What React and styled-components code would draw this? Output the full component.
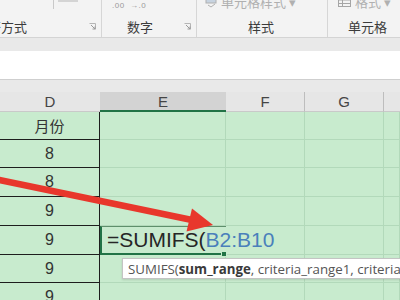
import React from 'react';
import styled, { createGlobalStyle } from 'styled-components';

const Global = createGlobalStyle`
  html, body { margin: 0; padding: 0; background: #fff; }
  body { font-family: "Liberation Sans", "Noto Sans CJK SC", sans-serif; }
  * { box-sizing: border-box; }
`;

const Screen = styled.div`
  position: relative;
  width: 400px;
  height: 300px;
  overflow: hidden;
  display: flex;
  flex-direction: column;
  background: #c8ebce;
`;

const Ribbon = styled.div`
  flex: none;
  height: 38px;
  display: flex;
  background: #f3f3f3;
  border-bottom: 1px solid #d4d4d4;
`;

const Group = styled.div`
  flex: none;
  width: ${(p) => p.$w}px;
  display: flex;
  flex-direction: column;
  overflow: hidden;
  border-right: ${(p) => (p.$last ? 'none' : '1px solid #d6d6d6')};
`;

const GroupTop = styled.div`
  height: 16px;
  display: flex;
  align-items: flex-start;
  padding-left: ${(p) => p.$pl || 0}px;
  gap: 4px;
  color: #a9a9a9;
  overflow: hidden;
`;

const GroupLabelRow = styled.div`
  height: 21px;
  display: flex;
  align-items: center;
  justify-content: space-between;
  padding-left: ${(p) => p.$pl || 0}px;
  padding-right: 5px;
`;

const GroupLabel = styled.span`
  font-family: "Noto Sans CJK SC", sans-serif;
  font-size: 13px;
  color: #3c3c3c;
  white-space: nowrap;
  margin-left: ${(p) => p.$ml || 0}px;
`;

const FadedText = styled.span`
  font-family: "Noto Sans CJK SC", sans-serif;
  font-size: 13px;
  line-height: 13px;
  margin-top: -5px;
  white-space: nowrap;
  color: #b0b0b0;
`;

const TinyText = styled.span`
  font-size: 8px;
  line-height: 9px;
  margin-top: 1px;
  color: #9a9a9a;
  white-space: nowrap;
  letter-spacing: 0.5px;
`;

const TinyDivider = styled.span`
  width: 1px;
  height: 9px;
  background: #c9c9c9;
`;

const TinyBox = styled.span`
  width: 20px;
  height: 2px;
  background: #d4d4d4;
`;

const Band = styled.div`
  flex: none;
  height: ${(p) => p.$h}px;
  background: #e9e9e9;
`;

const FormulaBar = styled.div`
  flex: none;
  height: 29px;
  background: #ffffff;
  border-bottom: 1px solid #cfcfcf;
`;

const Grid = styled.div`
  flex: none;
  display: grid;
  grid-template-columns: 100px 126px 79px 79px 16px;
  grid-template-rows: 20px 28px 28px 29px 29px 29px 28px 29px;
`;

const ColHead = styled.div`
  display: flex;
  align-items: center;
  justify-content: center;
  font-family: "Liberation Sans", sans-serif;
  font-size: 15px;
  color: #454545;
  background: ${(p) => (p.$active ? '#d3d3d3' : '#e6e6e6')};
  border-bottom: ${(p) => (p.$active ? '2px solid #217346' : '1px solid #c9c9c9')};
  border-right: ${(p) => (p.$sep ? '1px solid #bdbdbd' : 'none')};
`;

const DCell = styled.div`
  display: flex;
  align-items: center;
  justify-content: center;
  background: #c8ebce;
  border-right: 1px solid #1e1e1e;
  border-bottom: 1px solid #1e1e1e;
  font-family: "Liberation Sans", "Noto Sans CJK SC", sans-serif;
  font-size: ${(p) => (p.$cjk ? 15 : 16)}px;
  color: #333;
`;

const Cell = styled.div`
  background: #c8ebce;
  border-right: 1px solid #b2d9ba;
  border-bottom: 1px solid #b2d9ba;
`;

const ActiveCell = styled.div`
  position: relative;
  z-index: 2;
  display: flex;
  align-items: center;
  padding-left: 5px;
  background: #c8ebce;
  border-left: 2px solid #217346;
  border-top: 1px solid #5f8f6c;
  border-bottom: 2px solid #217346;
  white-space: nowrap;
  font-family: "Liberation Sans", sans-serif;
  font-size: 21px;
  color: #262626;
`;

const RefText = styled.span`
  color: #4a80bb;
`;

const FillHandle = styled.span`
  position: absolute;
  right: -1px;
  bottom: -4px;
  width: 6px;
  height: 6px;
  background: #217346;
  border: 1px solid #c8ebce;
`;

const Tooltip = styled.div`
  position: absolute;
  left: 122px;
  top: 258px;
  height: 21px;
  padding: 0 5px;
  display: flex;
  align-items: center;
  background: #fff;
  border: 1px solid #c4c4c4;
  box-shadow: 0 1px 2px rgba(0, 0, 0, 0.12);
  white-space: nowrap;
  font-family: "Open Sans", sans-serif;
  font-size: 13.3px;
  color: #555;
  z-index: 3;
`;

const Bold = styled.b`
  font-weight: 700;
  color: #3a3a3a;
`;

const ArrowLayer = styled.svg`
  position: absolute;
  left: 0;
  top: 0;
  width: 400px;
  height: 300px;
  z-index: 4;
  pointer-events: none;
`;

const Launcher = () => (
  <svg width="7" height="7" viewBox="0 0 7 7">
    <path d="M0.5 0.5h6v6" fill="none" stroke="#b5b5b5" strokeWidth="1" />
    <path d="M2 2l4 4M3.5 6H6V3.5" fill="none" stroke="#9a9a9a" strokeWidth="1" />
  </svg>
);

const StyleIcon = () => (
  <svg width="12" height="12" viewBox="0 0 12 12" style={{ marginTop: -4 }}>
    <rect x="1" y="1" width="10" height="6" fill="#c7d3e0" stroke="#b0b0b0" />
    <path d="M3 9l3 2 4-3" fill="none" stroke="#b0b0b0" />
  </svg>
);

const FormatIcon = () => (
  <svg width="13" height="12" viewBox="0 0 13 12" style={{ marginTop: -4 }}>
    <rect x="0.5" y="0.5" width="12" height="10" fill="none" stroke="#a5a5a5" />
    <path d="M0.5 4h12M0.5 7.5h12M4.5 0.5v10" stroke="#a5a5a5" />
  </svg>
);

const rows = ['8', '8', '9', '9', '9', '9'];

export default function App() {
  return (
    <>
      <Global />
      <Screen>
        <Ribbon>
          <Group $w={102}>
            <GroupTop $pl={53}>
              <TinyDivider />
              <TinyBox />
            </GroupTop>
            <GroupLabelRow>
              <GroupLabel $ml={-25}>对齐方式</GroupLabel>
              <Launcher />
            </GroupLabelRow>
          </Group>
          <Group $w={95}>
            <GroupTop $pl={10}>
              <TinyText>.00 &nbsp;→.0</TinyText>
            </GroupTop>
            <GroupLabelRow $pl={25}>
              <GroupLabel>数字</GroupLabel>
              <Launcher />
            </GroupLabelRow>
          </Group>
          <Group $w={131}>
            <GroupTop $pl={8}>
              <StyleIcon />
              <FadedText>单元格样式 ▾</FadedText>
            </GroupTop>
            <GroupLabelRow $pl={51}>
              <GroupLabel>样式</GroupLabel>
            </GroupLabelRow>
          </Group>
          <Group $w={72} $last>
            <GroupTop $pl={10}>
              <FormatIcon />
              <FadedText>格式 ▾</FadedText>
            </GroupTop>
            <GroupLabelRow $pl={20}>
              <GroupLabel>单元格</GroupLabel>
            </GroupLabelRow>
          </Group>
        </Ribbon>
        <Band $h={13} />
        <FormulaBar />
        <Band $h={12} />
        <Grid>
          <ColHead>D</ColHead>
          <ColHead $active>E</ColHead>
          <ColHead $sep>F</ColHead>
          <ColHead $sep>G</ColHead>
          <ColHead />

          <DCell $cjk>月份</DCell>
          <Cell />
          <Cell />
          <Cell />
          <Cell />

          {rows.map((v, i) =>
            i === 3 ? (
              <React.Fragment key={i}>
                <DCell>{v}</DCell>
                <ActiveCell>
                  =SUMIFS(<RefText>B2:B10</RefText>
                  <FillHandle />
                </ActiveCell>
                <Cell />
                <Cell />
                <Cell />
              </React.Fragment>
            ) : (
              <React.Fragment key={i}>
                <DCell>{v}</DCell>
                <Cell />
                <Cell />
                <Cell />
                <Cell />
              </React.Fragment>
            )
          )}
        </Grid>
        <Tooltip>
          SUMIFS(<Bold>sum_range</Bold>, criteria_range1, criteria1, ...)
        </Tooltip>
        <ArrowLayer viewBox="0 0 400 300">
          <line x1="-10" y1="178" x2="192" y2="220" stroke="#e8372c" strokeWidth="6.5" />
          <polygon points="213,225 186.5,231.5 192,208.5" fill="#e8372c" />
        </ArrowLayer>
      </Screen>
    </>
  );
}
